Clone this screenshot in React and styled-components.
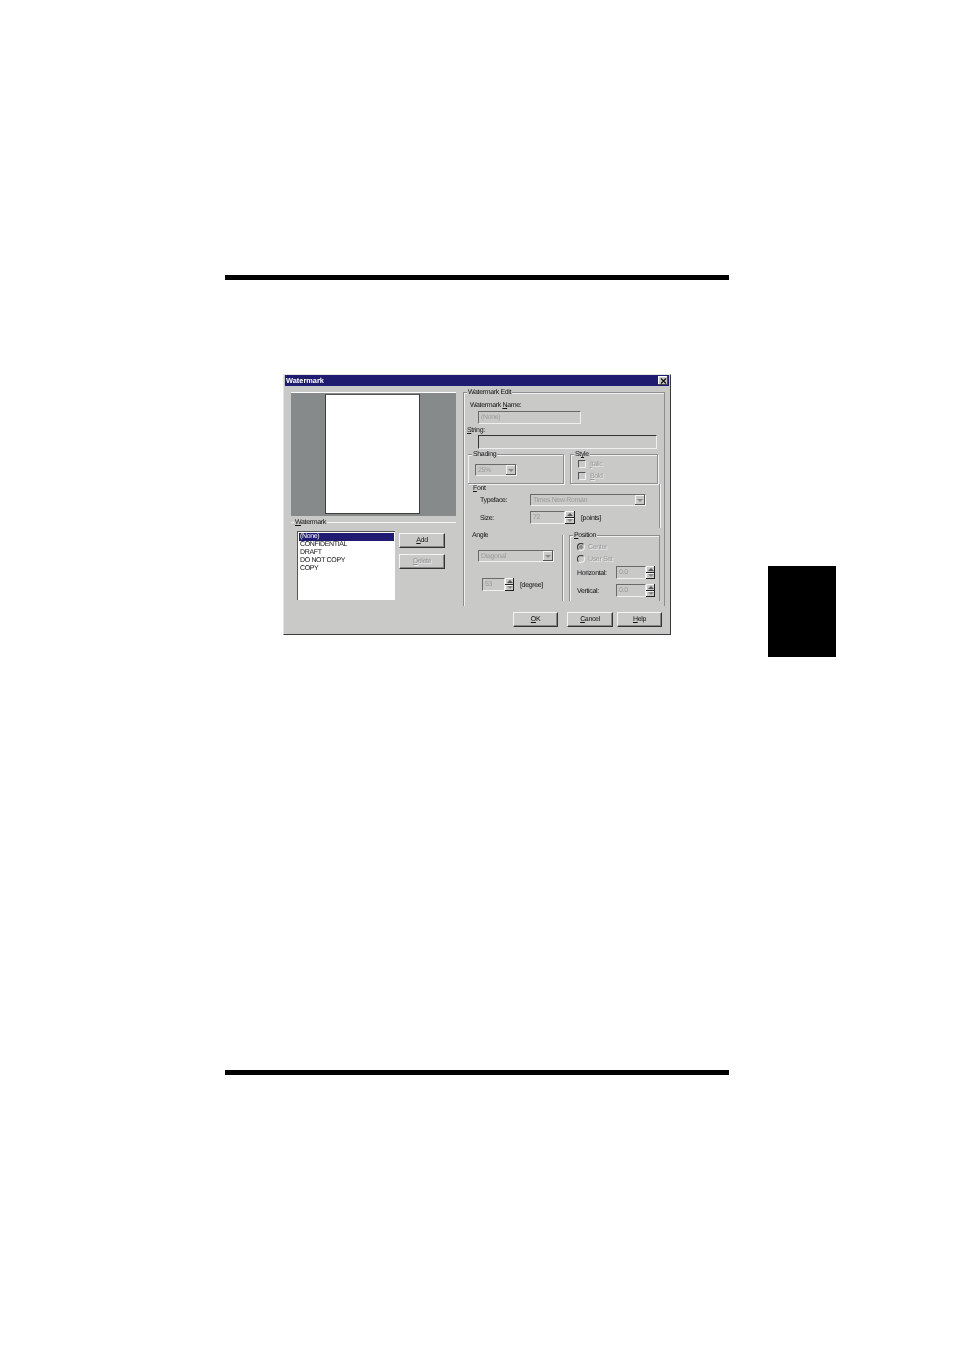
import React from "react";
import styled, { createGlobalStyle } from "styled-components";

const Global = createGlobalStyle`
  html, body { margin: 0; padding: 0; background: #fff; }
  body { font-family: "Liberation Sans", Arial, sans-serif; }
  #root { width: 954px; height: 1351px; overflow: hidden; }
`;

const FACE = "#c9c9c8";
const ETCH = "#8c8e8e";

const Page = styled.div`
  width: 954px;
  height: 1351px;
  padding: 275px 0 0 225px;
  box-sizing: border-box;
`;
const Rule = styled.div`
  width: 504px;
  height: 5px;
  background: #000;
`;
const Middle = styled.div`
  display: flex;
  height: 790px;
`;
const Main = styled.div`
  width: 504px;
  padding: 94px 0 0 58px;
  box-sizing: border-box;
`;
const ChapterTab = styled.div`
  width: 68px;
  height: 91px;
  margin: 286px 0 0 39px;
  background: #000;
`;
const Dialog = styled.div`
  width: 388px;
  height: 261px;
  box-sizing: border-box;
  padding: 0 1px;
  background: ${FACE};
  border: 1px solid #e4e4e4;
  border-right-color: #3a3a3a;
  border-bottom-color: #3a3a3a;
  color: #141414;
  font-size: 7px;
  letter-spacing: -0.35px;
  text-rendering: geometricPrecision;
  line-height: 8px;
  filter: blur(0.3px);
  u { text-decoration: underline; }
`;
const TitleBar = styled.div`
  height: 11px;
  display: flex;
  align-items: center;
  justify-content: space-between;
  background: #1f1b70;
  color: #fff;
  font-weight: bold;
  font-size: 7.4px;
  letter-spacing: 0;
  padding: 0 1px 0 1px;
`;
const CloseBtn = styled.span`
  width: 10px;
  height: 9px;
  display: flex;
  align-items: center;
  justify-content: center;
  background: ${FACE};
  box-shadow: inset -1px -1px 0 #444, inset 1px 1px 0 #fff;
`;
const Body = styled.div`
  display: flex;
  gap: 7px;
  padding: 6px 0 0 6px;
`;
const LeftPane = styled.div`
  width: 165px;
`;
const Preview = styled.div`
  height: 124px;
  box-sizing: border-box;
  border-top: 1px solid #fff;
  padding-top: 1px;
  display: flex;
  justify-content: center;
  background: #868a8a;
`;
const Sheet = styled.div`
  width: 95px;
  height: 120px;
  box-sizing: border-box;
  background: #fff;
  border-left: 1px solid #3d3d3d;
  border-top: 1px solid #555;
  border-right: 1px solid #3d3d3d;
  border-bottom: 1px solid #3d3d3d;
  margin-right: 2px;
`;
const GroupHead = styled.div`
  display: flex;
  align-items: center;
  height: 8px;
  margin-top: 2px;
`;
const Dash = styled.span`
  width: 3px;
  height: 1px;
  background: #f4f4f4;
  margin-right: 1px;
`;
const HeadLine = styled.span`
  flex: 1;
  height: 1px;
  margin-left: 1px;
  background: #f4f4f4;
`;
const HeadLabel = styled.span`
  height: 8px;
  line-height: 10px;
`;
const ListRow = styled.div`
  display: flex;
  gap: 4px;
  margin-top: 5px;
  padding-left: 6px;
`;
const ListBox = styled.div`
  width: 98px;
  height: 69px;
  box-sizing: border-box;
  padding: 1px 1px 0 1px;
  background: #fff;
  border-left: 1px solid #555;
  border-top: 1px solid #555;
`;
const ListItem = styled.div`
  height: 8px;
  padding-left: 1px;
  line-height: 8px;
  color: ${(p) => (p.$selected ? "#fff" : "#141414")};
  background: ${(p) => (p.$selected ? "#1f1b70" : "transparent")};
`;
const ButtonColumn = styled.div`
  display: flex;
  flex-direction: column;
  gap: 6px;
  margin-top: 2px;
`;
const Button = styled.div`
  width: ${(p) => p.$w}px;
  height: 15px;
  box-sizing: border-box;
  display: flex;
  align-items: center;
  justify-content: center;
  background: ${FACE};
  color: ${(p) => (p.$disabled ? "#8f8f8f" : "#141414")};
  text-shadow: ${(p) => (p.$disabled ? "1px 1px 0 #eee" : "none")};
  border: 1px solid #f4f4f4;
  border-right-color: #333;
  border-bottom-color: #333;
  box-shadow: inset -1px -1px 0 #888;
`;
const Group = styled.div`
  position: relative;
  box-sizing: border-box;
  width: ${(p) => p.$w}px;
  height: ${(p) => p.$h}px;
  margin: ${(p) => p.$m || "0"};
  border-style: solid;
  border-color: ${ETCH};
  border-width: ${(p) => p.$edges || "1px"};
  box-shadow: ${(p) => p.$shadow || "inset 1px 1px 0 #f2f2f2, 1px 1px 0 #f2f2f2"};
`;
const Legend = styled.span`
  position: absolute;
  left: ${(p) => p.$x}px;
  top: -4px;
  padding: 0 1px;
  height: 8px;
  background: ${FACE};
`;
const Caption = styled.div`
  height: 8px;
  line-height: 10px;
  margin: ${(p) => p.$m || "0"};
  white-space: nowrap;
`;
const Field = styled.div`
  box-sizing: border-box;
  width: ${(p) => p.$w}px;
  height: ${(p) => p.$h || 13}px;
  margin: ${(p) => p.$m || "0"};
  padding: 1px 0 0 2px;
  display: flex;
  align-items: center;
  justify-content: space-between;
  flex: none;
  color: #9b9b9b;
  background: ${FACE};
  border: 1px solid #f0f0f0;
  border-top-color: ${(p) => p.$dark || "#6a6a6a"};
  border-left-color: ${(p) => p.$dark || "#6a6a6a"};
`;
const DropBtn = styled.span`
  width: 10px;
  height: 10px;
  margin-top: -1px;
  display: flex;
  align-items: center;
  justify-content: center;
  background: ${FACE};
  box-shadow: inset -1px -1px 0 #555, inset 1px 1px 0 #f4f4f4;
`;
const Arrow = styled.span`
  width: 0;
  height: 0;
  border-left: 3px solid transparent;
  border-right: 3px solid transparent;
  border-top: ${(p) => (p.$up ? "0" : "3px solid #8a8a8a")};
  border-bottom: ${(p) => (p.$up ? "3px solid #555" : "0")};
`;
const Spin = styled.div`
  display: flex;
  flex-direction: column;
  width: ${(p) => p.$w || 9}px;
  flex: none;
`;
const SpinBtn = styled.span`
  height: 6.5px;
  display: flex;
  align-items: center;
  justify-content: center;
  background: ${FACE};
  box-shadow: inset -1px -1px 0 #222, inset 1px 1px 0 #f4f4f4;
`;
const Spinner = ({ w }) => (
  <Spin $w={w}>
    <SpinBtn><Arrow $up /></SpinBtn>
    <SpinBtn><Arrow /></SpinBtn>
  </Spin>
);
const Row = styled.div`
  display: flex;
  align-items: center;
  margin: ${(p) => p.$m || "0"};
`;
const SplitRow = styled.div`
  display: flex;
  gap: ${(p) => p.$gap}px;
  margin: ${(p) => p.$m};
`;
const Check = styled.span`
  width: 8px;
  height: 8px;
  box-sizing: border-box;
  flex: none;
  margin-right: 4px;
  border: 1px solid #f0f0f0;
  border-top-color: #555;
  border-left-color: #555;
`;
const Radio = styled.span`
  width: 8px;
  height: 8px;
  box-sizing: border-box;
  flex: none;
  margin-right: 3px;
  border-radius: 50%;
  border: 1px solid #f0f0f0;
  border-top-color: #333;
  border-left-color: #333;
  background: ${(p) => (p.$on ? "#8a8a8a" : FACE)};
  box-shadow: inset 0 0 0 ${(p) => (p.$on ? "1px" : "0")} ${FACE};
`;
const Disabled = styled.span`
  height: 8px;
  line-height: 10px;
  color: #9a9a9a;
  text-shadow: 1px 1px 0 #ececec;
`;
const LabelCell = styled.span`
  width: ${(p) => p.$w}px;
  height: 8px;
  line-height: 10px;
  flex: none;
`;
const Note = styled.span`
  height: 8px;
  line-height: 10px;
  margin-left: ${(p) => p.$ml}px;
  white-space: nowrap;
`;
const Footer = styled.div`
  display: flex;
  justify-content: flex-end;
  margin-top: 6px;
  padding-right: 7px;
`;
const FooterBtn = styled(Button)`
  margin-left: ${(p) => p.$ml || 0}px;
`;

export default function App() {
  return (
    <Page>
      <Global />
      <Rule />
      <Middle>
        <Main>
          <Dialog>
            <TitleBar>
              <span>Watermark</span>
              <CloseBtn>
                <svg width="7" height="6" viewBox="0 0 7 6">
                  <path d="M1 0.5 L6 5.5 M6 0.5 L1 5.5" stroke="#111" strokeWidth="1.3" />
                </svg>
              </CloseBtn>
            </TitleBar>
            <Body>
              <LeftPane>
                <Preview><Sheet /></Preview>
                <GroupHead>
                  <Dash />
                  <HeadLabel><u>W</u>atermark</HeadLabel>
                  <HeadLine />
                </GroupHead>
                <ListRow>
                  <ListBox>
                    <ListItem $selected>(None)</ListItem>
                    <ListItem>CONFIDENTIAL</ListItem>
                    <ListItem>DRAFT</ListItem>
                    <ListItem>DO NOT COPY</ListItem>
                    <ListItem>COPY</ListItem>
                  </ListBox>
                  <ButtonColumn>
                    <Button $w={46}><span><u>A</u>dd</span></Button>
                    <Button $w={46} $disabled><span><u>D</u>elete</span></Button>
                  </ButtonColumn>
                </ListRow>
              </LeftPane>
              <Group $w={202} $h={214} $edges="1px 1px 0 1px" $shadow="inset 1px 1px 0 #f2f2f2">
                <Legend $x={3}>Watermark Edit</Legend>
                <Caption $m="8px 0 0 6px">Watermark <u>N</u>ame:</Caption>
                <Field $w={103} $m="2px 0 0 14px">(None)</Field>
                <Caption $m="2px 0 0 3px"><u>S</u>tring:</Caption>
                <Field $w={179} $h={14} $m="1px 0 0 14px" $dark="#333" />
                <SplitRow $gap={6} $m="5px 0 0 4px">
                  <Group $w={96} $h={30} $edges="1px 1px 1px 0">
                    <Legend $x={4}>Shading</Legend>
                    <Field $w={42} $h={12} $m="9px 0 0 7px">25%<DropBtn><Arrow /></DropBtn></Field>
                  </Group>
                  <Group $w={88} $h={30}>
                    <Legend $x={3}>St<u>y</u>le</Legend>
                    <Row $m="5px 0 0 7px"><Check /><Disabled><u>I</u>talic</Disabled></Row>
                    <Row $m="4px 0 0 7px"><Check /><Disabled><u>B</u>old</Disabled></Row>
                  </Group>
                </SplitRow>
                <Group $w={192} $h={44} $m="0 0 0 4px" $edges="0 1px 0 0" $shadow="1px 0 0 #f2f2f2">
                  <Caption $m="0 0 0 5px"><u>F</u>ont</Caption>
                  <Row $m="2px 0 0 12px">
                    <LabelCell $w={50}>Typeface:</LabelCell>
                    <Field $w={116} $h={12}>Times New Roman<DropBtn><Arrow /></DropBtn></Field>
                  </Row>
                  <Row $m="5px 0 0 12px">
                    <LabelCell $w={50}>Size:</LabelCell>
                    <Field $w={35}>72</Field>
                    <Spinner w={10} />
                    <Note $ml={6}>[points]</Note>
                  </Row>
                </Group>
                <SplitRow $gap={6} $m="7px 0 0 4px">
                  <Group $w={95} $h={66} $edges="0 1px 0 0" $shadow="1px 0 0 #f2f2f2">
                    <Caption $m="-4px 0 0 4px">Angle</Caption>
                    <Field $w={76} $h={12} $m="11px 0 0 10px">Diagonal<DropBtn><Arrow /></DropBtn></Field>
                    <Row $m="16px 0 0 14px">
                      <Field $w={23}>53</Field>
                      <Spinner />
                      <Note $ml={6}>[degree]</Note>
                    </Row>
                  </Group>
                  <Group $w={91} $h={66} $edges="1px 1px 0 1px" $shadow="inset 1px 1px 0 #f2f2f2">
                    <Legend $x={3}><u>P</u>osition</Legend>
                    <Row $m="7px 0 0 7px"><Radio $on /><Disabled>Center</Disabled></Row>
                    <Row $m="4px 0 0 7px"><Radio /><Disabled>User Set</Disabled></Row>
                    <Row $m="3px 0 0 7px">
                      <LabelCell $w={39}>Horizontal:</LabelCell>
                      <Field $w={30}>0.0</Field>
                      <Spinner />
                    </Row>
                    <Row $m="5px 0 0 7px">
                      <LabelCell $w={39}>Vertical:</LabelCell>
                      <Field $w={30}>0.0</Field>
                      <Spinner />
                    </Row>
                  </Group>
                </SplitRow>
              </Group>
            </Body>
            <Footer>
              <FooterBtn $w={45}><span><u>O</u>K</span></FooterBtn>
              <FooterBtn $w={46} $ml={9}><span><u>C</u>ancel</span></FooterBtn>
              <FooterBtn $w={45} $ml={4}><span><u>H</u>elp</span></FooterBtn>
            </Footer>
          </Dialog>
        </Main>
        <ChapterTab />
      </Middle>
      <Rule />
    </Page>
  );
}
